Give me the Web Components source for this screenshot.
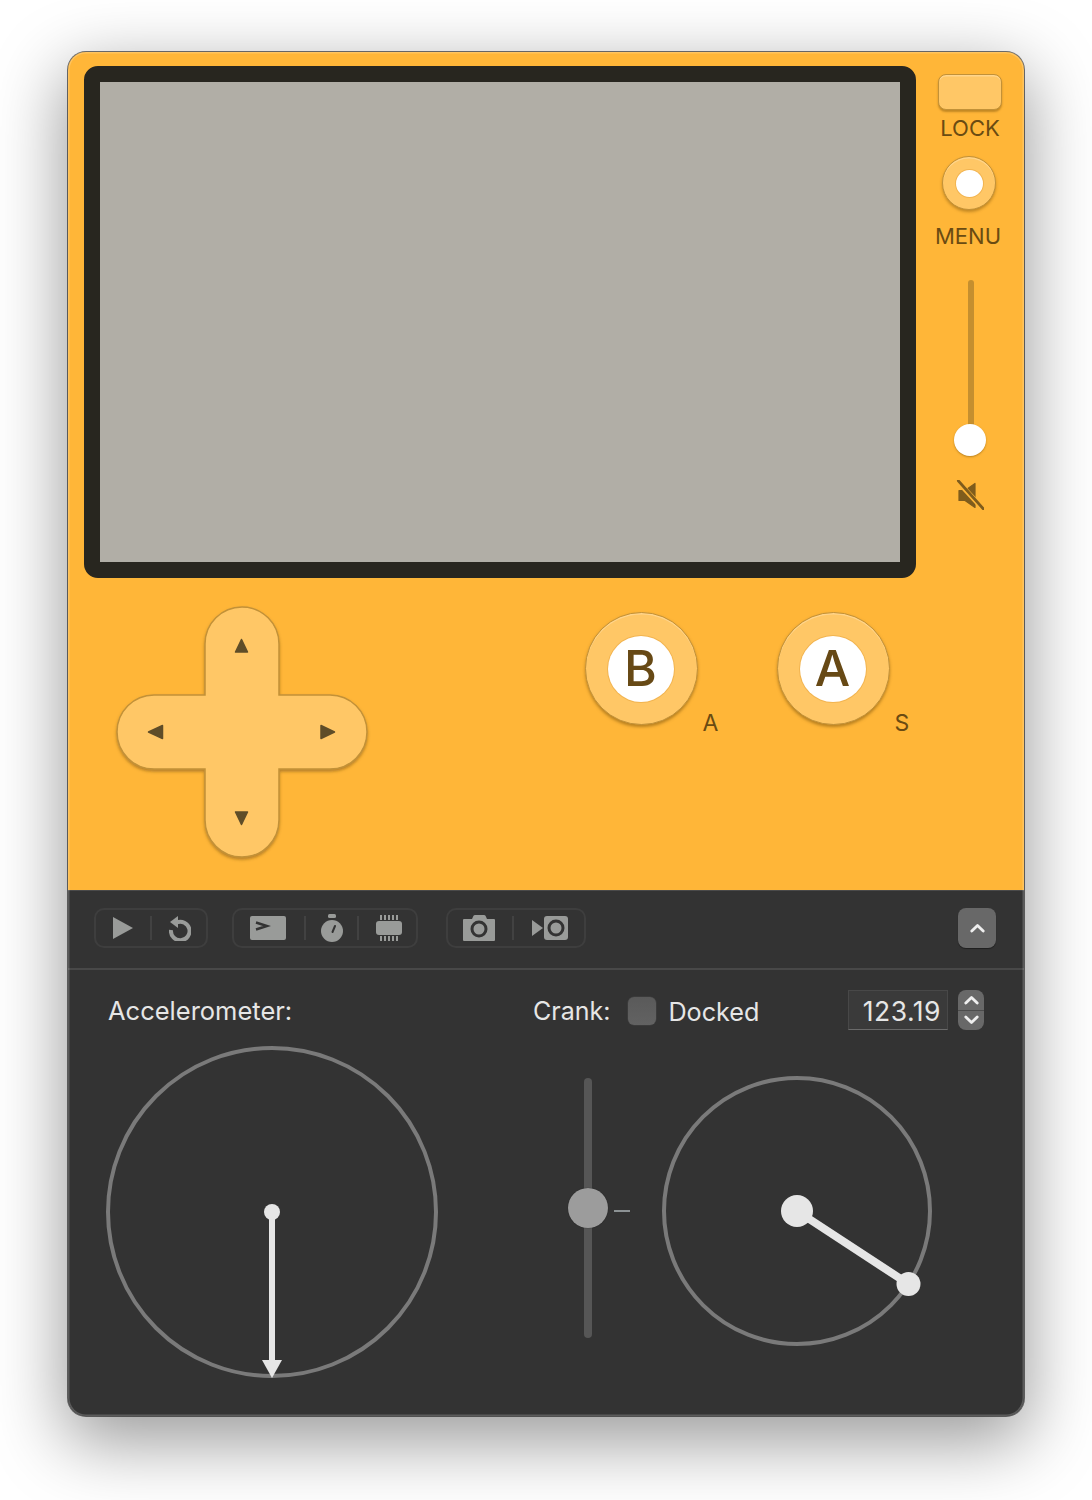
<!DOCTYPE html>
<html>
<head>
<meta charset="utf-8">
<title>Playdate Simulator</title>
<style>
    body {
        margin: 0;
        background: #fff;
        font-family: Inter, "Liberation Sans", sans-serif;
    }
</style>
</head>
<body>
<pd-window>
    <pd-device slot="device"></pd-device>
    <pd-toolbar slot="toolbar"></pd-toolbar>
    <pd-panel slot="panel"></pd-panel>
</pd-window>

<script>
function define(name, html) {
    const template = document.createElement('template');
    template.innerHTML = html;
    customElements.define(name, class extends HTMLElement {
        constructor() {
            super();
            this.attachShadow({ mode: 'open' });
            this.shadowRoot.appendChild(template.content.cloneNode(true));
            const key = this.getAttribute('key');
            const out = this.shadowRoot.querySelector('.key');
            if (key && out) out.textContent = key;
        }
    });
}

define('pd-window', `
    <style>
        :host {
            display: block;
            width: 956px;
            margin: 52px 68px 84px;
        }
        .frame {
            position: relative;
            border-radius: 18px;
            overflow: hidden;
            background: #333;
        }
        .shadow {
            border-radius: 18px;
            box-shadow: 0 0 0 1px rgba(0,0,0,.55), 0 22px 70px 4px rgba(0,0,0,.4);
        }
        .frame::after {
            content: "";
            position: absolute;
            inset: 0;
            border-radius: 18px;
            box-shadow: inset 0 0 0 1.5px rgba(255,255,255,.2);
            pointer-events: none;
        }
    </style>
    <div class="shadow">
        <div class="frame">
            <slot name="device"></slot>
            <slot name="toolbar"></slot>
            <slot name="panel"></slot>
        </div>
    </div>
`);

define('pd-device', `
    <style>
        :host {
            display: block;
            box-sizing: border-box;
            height: 838px;
            background: #ffb638;
            padding: 14px 0 0 16px;
        }
        .top { display: flex; }
        .bottom {
            display: flex;
            align-items: flex-start;
            margin-top: 29px;
            padding-left: 33px;
        }
        .face { display: flex; gap: 79px; margin: 5px 0 0 217.500px; }
    </style>
    <div class="top">
        <pd-screen></pd-screen>
        <pd-side></pd-side>
    </div>
    <div class="bottom">
        <pd-dpad></pd-dpad>
        <div class="face">
            <pd-face-button key="A">B</pd-face-button>
            <pd-face-button key="S">A</pd-face-button>
        </div>
    </div>
`);

define('pd-screen', `
    <style>
        :host {
            display: block;
            box-sizing: border-box;
            width: 832px;
            height: 512px;
            border: 16px solid #28261f;
            border-radius: 14px;
            background: #b1aea6;
        }
        div {
            width: 800px;
            height: 480px;
            background: #b1aea6;
        }
    </style>
    <div></div>
`);

define('pd-side', `
    <style>
        :host {
            display: flex;
            flex-direction: column;
            align-items: center;
            width: 108px;
            padding-top: 8px;
            color: #6a4b12;
            font-size: 22px;
            line-height: 24px;
        }
        .lock {
            box-sizing: border-box;
            width: 64px;
            height: 36px;
            border-radius: 8px;
            background: #ffc766;
            border: 1.5px solid #c29138;
            box-shadow: 0 2px 2px rgba(120,80,10,.45), inset 0 1.5px 0 rgba(255,255,255,.25);
        }
        .lock-label { margin-top: 6px; }
        .menu {
            box-sizing: border-box;
            display: flex;
            align-items: center;
            justify-content: center;
            width: 54px;
            height: 54px;
            margin: 16px 2px 0 0;
            border-radius: 50%;
            background: #ffc766;
            border: 1.5px solid #c29138;
            box-shadow: 0 2px 3px rgba(120,80,10,.45), inset 0 1.5px 0 rgba(255,255,255,.25);
        }
        .menu i {
            width: 27px;
            height: 27px;
            border-radius: 50%;
            background: #fff;
            box-shadow: 0 0 0 1px #f2b450;
        }
        .menu-label { margin: 14px 4px 0 0; }
        .volume {
            position: relative;
            width: 6px;
            height: 160px;
            margin: 32px 0 0 2px;
            background: #c58f2f;
            border-radius: 3px 3px 0 0;
        }
        .thumb {
            position: absolute;
            left: -14px;
            bottom: -16px;
            width: 32px;
            height: 32px;
            border-radius: 50%;
            background: #fff;
            box-shadow: 0 1px 2px rgba(120,80,10,.5);
        }
        svg { display: block; margin-top: 40px; }
    </style>
    <div class="lock"></div>
    <div class="lock-label">LOCK</div>
    <div class="menu"><i></i></div>
    <div class="menu-label">MENU</div>
    <div class="volume"><div class="thumb"></div></div>
    <svg width="28" height="30" viewBox="0 0 28 30">
        <path d="M3 10.500h6l10-7v24l-10-7H3z" fill="#7f5c1c" stroke="#7f5c1c" stroke-linejoin="round" stroke-width="1.200"/>
        <path d="M3.800 3.800l24 26" stroke="#ffb638" stroke-width="5"/>
        <path d="M2.300 .8l25 28" stroke="#7f5c1c" stroke-width="2.800" stroke-linecap="round"/>
    </svg>
`);

define('pd-dpad', `
    <style>
        :host {
            display: block;
            width: 250px;
            height: 250px;
            flex: none;
        }
        svg { display: block; overflow: visible; }
    </style>
    <svg width="250" height="250" viewBox="0 0 250 250">
        <defs>
            <filter id="drop" x="-10%" y="-10%" width="120%" height="120%">
                <feDropShadow dx="0" dy="2" stdDeviation="1.5" flood-color="#6f4a08" flood-opacity=".5"/>
            </filter>
        </defs>
        <path filter="url(#drop)" fill="#ffc766" stroke="#c29138" stroke-width="1.5"
            d="M88 37a37 37 0 0 1 74 0v51h51a37 37 0 0 1 0 74h-51v51a37 37 0 0 1-74 0v-51H37a37 37 0 0 1 0-74h51z"/>
        <g fill="#5f4d28" stroke="#5f4d28" stroke-width="1.5" stroke-linejoin="round">
            <path d="M124.500 32.500l-6 12.500h12z"/>
            <path d="M124.500 217.500l-6-12.500h12z"/>
            <path d="M31.500 125l14-6.500v13z"/>
            <path d="M217.500 125l-13.500-6.500v13z"/>
        </g>
    </svg>
`);

define('pd-face-button', `
    <style>
        :host {
            display: block;
            position: relative;
            box-sizing: border-box;
            width: 113px;
            height: 113px;
            border-radius: 50%;
            background: #ffc766;
            border: 1.5px solid #c29138;
            box-shadow: 0 2px 3px rgba(120,80,10,.5), inset 0 1.5px 0 rgba(255,255,255,.25);
        }
        .cap {
            position: absolute;
            left: 22px;
            top: 22.500px;
            width: 66px;
            height: 66px;
            border-radius: 50%;
            background: #fff;
            box-shadow: 0 0 0 1px #f2b450;
            color: #674915;
            font-size: 50px;
            font-weight: 500;
            line-height: 64px;
            text-align: center;
        }
        .key {
            position: absolute;
            left: 117px;
            top: 97.500px;
            color: #6a4b12;
            font-size: 23px;
            line-height: 24px;
        }
    </style>
    <div class="cap"><slot></slot></div>
    <div class="key"></div>
`);

define('pd-toolbar', `
    <style>
        :host {
            display: flex;
            align-items: flex-start;
            box-sizing: border-box;
            height: 80px;
            padding: 17px 28px 0 26px;
            background: #333;
            border-top: 1px solid #4a4a4a;
            border-bottom: 2px solid #484848;
        }
        .group {
            display: flex;
            align-items: center;
            box-sizing: border-box;
            height: 40px;
            border: 2px solid #3e3e3e;
            border-radius: 10px;
        }
        .sep {
            width: 2px;
            height: 24px;
            background: #424242;
        }
        svg { display: block; flex: none; }
        .collapse {
            display: flex;
            align-items: center;
            justify-content: center;
            width: 38px;
            height: 40px;
            margin-left: auto;
            border-radius: 8px;
            background: #686868;
            box-shadow: 0 1px 1px rgba(0,0,0,.4);
        }
    </style>
    <div class="group" style="width:114px">
        <svg style="margin-left:17px" width="20" height="22" viewBox="0 0 20 22"><path d="M0 0l20 11L0 22z" fill="#999b99"/></svg>
        <div class="sep" style="margin-left:17px"></div>
        <svg style="margin-left:17px" width="22" height="25" viewBox="0 0 22 25">
            <path d="M7.500 6.500A9.300 9.300 0 1 1 2 14" fill="none" stroke="#999b99" stroke-width="4"/>
            <path d="M9 0v12L1 6z" fill="#999b99"/>
        </svg>
    </div>
    <div class="group" style="width:186px;margin-left:24px">
        <svg style="margin-left:16px" width="36" height="24" viewBox="0 0 36 24">
            <rect width="36" height="24" rx="2" fill="#999b99"/>
            <path d="M6 6.500l11 3.500-11 3.500" fill="none" stroke="#333" stroke-width="2.400"/>
        </svg>
        <div class="sep" style="margin-left:18px"></div>
        <svg style="margin-left:15px" width="22" height="28" viewBox="0 0 22 28">
            <rect x="7" y="0" width="8" height="4" rx="1.500" fill="#999b99"/>
            <circle cx="11" cy="17" r="11" fill="#999b99"/>
            <path d="M11.500 18l2.500-6" stroke="#333" stroke-width="2" stroke-linecap="round"/>
        </svg>
        <div class="sep" style="margin-left:14px"></div>
        <svg style="margin-left:17px" width="26" height="26" viewBox="0 0 26 26">
            <rect y="6" width="26" height="14" rx="3" fill="#999b99"/>
            <path d="M5 0v5M9 0v5M13 0v5M17 0v5M21 0v5M5 21v5M9 21v5M13 21v5M17 21v5M21 21v5" stroke="#999b99" stroke-width="2"/>
        </svg>
    </div>
    <div class="group" style="width:140px;margin-left:28px">
        <svg style="margin-left:15px" width="32" height="26" viewBox="0 0 32 26">
            <path d="M9 4l1.500-3.200Q11 0 12 0h9q1 0 1.500.8L24 4h7q1 0 1 1v20q0 1-1 1H1q-1 0-1-1V5q0-1 1-1z" fill="#999b99"/>
            <circle cx="16" cy="14" r="7" fill="none" stroke="#333" stroke-width="3"/>
        </svg>
        <div class="sep" style="margin-left:17px"></div>
        <svg style="margin-left:18px" width="36" height="24" viewBox="0 0 36 24">
            <path d="M0 4l11 8-11 8z" fill="#999b99"/>
            <rect x="12" width="24" height="24" rx="3" fill="#999b99"/>
            <circle cx="24" cy="12" r="7" fill="none" stroke="#333" stroke-width="3"/>
        </svg>
    </div>
    <div class="collapse">
        <svg width="15" height="10" viewBox="0 0 15 10"><path d="M1.800 8L7.500 2.500 13.200 8" fill="none" stroke="#eee" stroke-width="2.800" stroke-linecap="round" stroke-linejoin="round"/></svg>
    </div>
`);

define('pd-panel', `
    <style>
        :host {
            display: flex;
            align-items: flex-start;
            box-sizing: border-box;
            height: 446px;
            padding: 20px 0 0 36px;
            background: #333;
        }
        pd-accelerometer { flex: 0 0 428px; }
    </style>
    <pd-accelerometer></pd-accelerometer>
    <pd-crank></pd-crank>
`);

define('pd-accelerometer', `
    <style>
        :host {
            display: block;
            color: #e6e6e6;
            font-size: 25.500px;
            line-height: 42px;
        }
        .label { margin-left: 4px; }
        svg { display: block; margin-top: 12px; }
    </style>
    <div class="label">Accelerometer:</div>
    <svg width="336" height="336" viewBox="0 0 336 336">
        <circle cx="168" cy="168" r="164" fill="none" stroke="#7a7a7a" stroke-width="4"/>
        <rect x="165" y="168" width="6" height="150" fill="#e6e6e6"/>
        <circle cx="168" cy="168" r="8" fill="#e6e6e6"/>
        <path d="M158 316h20l-10 18z" fill="#e6e6e6"/>
    </svg>
`);

define('pd-crank', `
    <style>
        :host {
            display: block;
            color: #e6e6e6;
            font-size: 25px;
            line-height: 40px;
        }
        .head {
            display: flex;
            align-items: center;
            height: 40px;
            padding-left: 1px;
        }
        .head span { padding-top: 2px; }
        .check {
            box-sizing: border-box;
            width: 28px;
            height: 28px;
            margin: 2px 0 0 18px;
            border-radius: 6px;
            background: linear-gradient(#5a5a5a, #626262);
            box-shadow: 0 0 0 .5px #444;
        }
        .head .docked { margin-left: 12px; padding-top: 4px; font-size: 25.200px; }
        .value {
            box-sizing: border-box;
            width: 100px;
            height: 40px;
            margin-left: auto;
            padding: 1px 6px 0 0;
            text-align: right;
            background: #3a3a3a;
            border: 1px solid #484848;
            border-bottom-color: #6a6a6a;
            line-height: 38px;
            letter-spacing: .5px;
            font-size: 26.500px;
        }
        .stepper {
            display: flex;
            flex-direction: column;
            width: 26px;
            height: 40px;
            margin-left: 10px;
            border-radius: 8px;
            overflow: hidden;
            background: #686868;
        }
        .stepper div {
            flex: 1;
            display: flex;
            align-items: center;
            justify-content: center;
        }
        .stepper div + div { border-top: 1px solid #4c4c4c; }
        .body {
            display: flex;
            align-items: flex-start;
            margin-top: 41px;
            width: 452px;
        }
        pd-crank-slider { margin: 7px 0 0 36px; }
        svg.dial { display: block; margin-left: 49px; }
    </style>
    <div class="head" style="width:451px">
        <span>Crank:</span>
        <div class="check"></div>
        <span class="docked">Docked</span>
        <div class="value">123.19</div>
        <div class="stepper">
            <div><svg width="15" height="10" viewBox="0 0 15 10"><path d="M1.800 8L7.500 2.500 13.200 8" fill="none" stroke="#eee" stroke-width="2.800" stroke-linecap="round" stroke-linejoin="round"/></svg></div>
            <div><svg width="15" height="10" viewBox="0 0 15 10"><path d="M1.800 2L7.500 7.500 13.200 2" fill="none" stroke="#eee" stroke-width="2.800" stroke-linecap="round" stroke-linejoin="round"/></svg></div>
        </div>
    </div>
    <div class="body">
        <pd-crank-slider></pd-crank-slider>
        <svg class="dial" width="280" height="280" viewBox="0 0 280 280">
            <circle cx="140" cy="140" r="133" fill="none" stroke="#7a7a7a" stroke-width="4"/>
            <path d="M140 140L251.500 213" stroke="#e6e6e6" stroke-width="8"/>
            <circle cx="140" cy="140" r="16" fill="#e6e6e6"/>
            <circle cx="251.500" cy="213" r="12" fill="#e6e6e6"/>
        </svg>
    </div>
`);

define('pd-crank-slider', `
    <style>
        :host {
            display: block;
            position: relative;
            width: 40px;
            height: 260px;
            flex: none;
        }
        .track {
            width: 8px;
            height: 260px;
            margin-left: 16px;
            border-radius: 4px;
            background: #565656;
        }
        .thumb {
            position: absolute;
            left: 0;
            top: 110px;
            width: 40px;
            height: 40px;
            border-radius: 50%;
            background: #9c9c9c;
            box-shadow: 0 0 1px rgba(0,0,0,.6);
        }
        .tick {
            position: absolute;
            left: 46px;
            top: 132px;
            width: 16px;
            height: 2px;
            background: #8c9294;
        }
    </style>
    <div class="track"></div>
    <div class="thumb"></div>
    <div class="tick"></div>
`);
</script>
</body>
</html>
